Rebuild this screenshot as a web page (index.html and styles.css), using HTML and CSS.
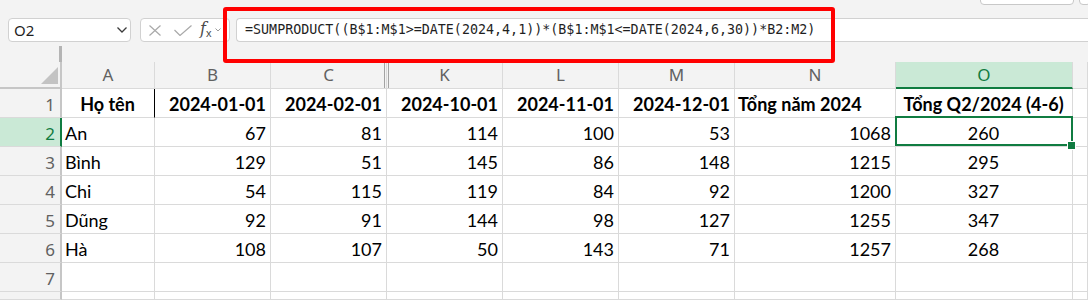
FILE: index.html
```html
<!DOCTYPE html>
<html lang="vi">
  <head>
    <meta charset="utf-8">
    <title>Bảng tính</title>
    <link rel="stylesheet" href="styles.css">
  </head>
  <body>
    <div class="ribbon">
      <div class="strip"><span></span><span class="edge"></span></div>
      <div class="bar">
        <div class="namebox">
          <span>O2</span>
          <svg width="10" height="6" viewBox="0 0 10 6"><polyline points="0.5,0.5 5,5 9.5,0.5" fill="none" stroke="#3b3b3b" stroke-width="1.3"/></svg>
        </div>
        <div class="fxbox">
          <svg class="x" width="12" height="11" viewBox="0 0 12 11"><path d="M0.5 0.5 L11.5 10.5 M11.5 0.5 L0.5 10.5" stroke="#a9a9a9" stroke-width="1.2"/></svg>
          <svg class="ok" width="18" height="11" viewBox="0 0 18 11"><polyline points="0.5,5 6,10.5 17.5,0.5" fill="none" stroke="#a9a9a9" stroke-width="1.2"/></svg>
          <span class="fx"><i>f</i><sub>x</sub></span>
          <svg class="dd" width="6" height="4" viewBox="0 0 6 4"><polyline points="0.5,0.5 3,3 5.5,0.5" fill="none" stroke="#9a9a9a" stroke-width="1"/></svg>
        </div>
        <div class="formula">=SUMPRODUCT((B$1:M$1&gt;=DATE(2024,4,1))*(B$1:M$1&lt;=DATE(2024,6,30))*B2:M2)</div>
      </div>
      <div class="split"><span></span></div>
      <div class="mark"></div>
    </div>

    <div class="sheet">
      <div class="corner"><svg width="17" height="17" viewBox="0 0 17 17"><polygon points="17,0 17,17 0,17" fill="#c3c3c3"/></svg></div>
      <div class="col">A</div>
      <div class="col">B</div>
      <div class="col hide-r">C</div>
      <div class="col hide-l">K</div>
      <div class="col">L</div>
      <div class="col">M</div>
      <div class="col">N</div>
      <div class="col sel">O</div>
      <div class="col"></div>

      <div class="row">1</div>
      <div class="c b ctr edge">Họ tên</div>
      <div class="c b num">2024-01-01</div>
      <div class="c b num">2024-02-01</div>
      <div class="c b num">2024-10-01</div>
      <div class="c b num">2024-11-01</div>
      <div class="c b num">2024-12-01</div>
      <div class="c b">Tổng năm 2024</div>
      <div class="c b ctr">Tổng Q2/2024 (4-6)</div>
      <div class="c"></div>

      <div class="row sel">2</div>
      <div class="c">An</div>
      <div class="c num">67</div>
      <div class="c num">81</div>
      <div class="c num">114</div>
      <div class="c num">100</div>
      <div class="c num">53</div>
      <div class="c num">1068</div>
      <div class="c ctr cur">260</div>
      <div class="c"></div>

      <div class="row">3</div>
      <div class="c">Bình</div>
      <div class="c num">129</div>
      <div class="c num">51</div>
      <div class="c num">145</div>
      <div class="c num">86</div>
      <div class="c num">148</div>
      <div class="c num">1215</div>
      <div class="c ctr">295</div>
      <div class="c"></div>

      <div class="row">4</div>
      <div class="c">Chi</div>
      <div class="c num">54</div>
      <div class="c num">115</div>
      <div class="c num">119</div>
      <div class="c num">84</div>
      <div class="c num">92</div>
      <div class="c num">1200</div>
      <div class="c ctr">327</div>
      <div class="c"></div>

      <div class="row">5</div>
      <div class="c">Dũng</div>
      <div class="c num">92</div>
      <div class="c num">91</div>
      <div class="c num">144</div>
      <div class="c num">98</div>
      <div class="c num">127</div>
      <div class="c num">1255</div>
      <div class="c ctr">347</div>
      <div class="c"></div>

      <div class="row">6</div>
      <div class="c">Hà</div>
      <div class="c num">108</div>
      <div class="c num">107</div>
      <div class="c num">50</div>
      <div class="c num">143</div>
      <div class="c num">71</div>
      <div class="c num">1257</div>
      <div class="c ctr">268</div>
      <div class="c"></div>

      <div class="row">7</div>
      <div class="c"></div><div class="c"></div><div class="c"></div><div class="c"></div><div class="c"></div><div class="c"></div><div class="c"></div><div class="c"></div><div class="c"></div>

      <div class="row"></div>
      <div class="c"></div><div class="c"></div><div class="c"></div><div class="c"></div><div class="c"></div><div class="c"></div><div class="c"></div><div class="c"></div><div class="c"></div>
    </div>
  </body>
</html>
```

FILE: styles.css
```css
* {
  box-sizing: border-box;
}
body {
  margin: 0;
  width: 1088px;
  height: 300px;
  overflow: hidden;
  background-color: #fff;
  font-family: Lato, "Liberation Sans", sans-serif;
  color: #000;
}

/* formula bar area */
.ribbon {
  position: relative;
  height: 62px;
  background-color: #f3f3f3;
}
.strip {
  display: flex;
  justify-content: flex-end;
  gap: 5px;
  height: 7px;
  overflow: hidden;
  & > span {
    width: 94px;
    height: 13px;
    margin-top: -8px;
    background-color: #fff;
    border: 1px solid #c8c8c8;
    border-radius: 4px;
    &.edge {
      width: 12px;
      margin-right: -3px;
    }
  }
}
.bar {
  display: flex;
  height: 24px;
  margin-top: 11px;
  padding-left: 8px;
}
.namebox {
  display: flex;
  align-items: center;
  justify-content: space-between;
  width: 123px;
  padding: 0 3px 0 5px;
  background-color: #fff;
  border: 1px solid #d1d1d1;
  border-radius: 4px;
  font: 15px/22px "Noto Sans", sans-serif;
  color: #1f1f1f;
}
.fxbox {
  display: flex;
  align-items: center;
  width: 90px;
  margin-left: 9px;
  padding-left: 8px;
  background-color: #fff;
  border: 1px solid #d1d1d1;
  border-radius: 4px;
  & .ok {
    margin-left: 13px;
  }
  & .fx {
    margin-left: 8px;
    font: 16px/1 "DejaVu Serif", serif;
    color: #4a4a4a;
    & sub {
      font-size: 11px;
      font-family: "Liberation Sans", sans-serif;
      vertical-align: -3px;
    }
  }
  & .dd {
    margin-left: 4px;
  }
}
.formula {
  flex: 1;
  margin-left: 6px;
  padding-left: 8px;
  background-color: #fff;
  border: 1px solid #d1d1d1;
  border-right: none;
  border-radius: 4px 0 0 4px;
  font: 13.35px/22px "DejaVu Sans Mono", monospace;
  color: #1f1f1f;
  white-space: pre;
}
.split {
  height: 20px;
  & > span {
    display: block;
    width: 3px;
    height: 16px;
    margin: 4px 0 0 59px;
    background-color: #b4b4b4;
  }
}
/* annotation box drawn over the formula */
.mark {
  position: absolute;
  left: 223px;
  top: 7px;
  width: 612px;
  height: 56px;
  border: 4px solid #ff0000;
  border-radius: 3px;
}

/* grid */
.sheet {
  display: grid;
  grid-template-columns: 62px 93px 116px 116px 116px 116px 116px 161px 177px 1fr;
  grid-template-rows: 27px repeat(7, 29px) 8px;
  & > div {
    border-right: 1px solid #dadada;
    border-bottom: 1px solid #dadada;
    white-space: nowrap;
  }
}
.corner {
  display: flex;
  align-items: flex-end;
  justify-content: flex-end;
  padding: 0 2px 3px 0;
  background-color: #f3f3f3;
  border-right: 2px solid #c6c6c6 !important;
  border-bottom: 2px solid #c6c6c6 !important;
}
.col {
  background-color: #f3f3f3;
  font: 17px/25px "Noto Sans", sans-serif;
  color: #616161;
  text-align: center;
  &.hide-r {
    box-shadow: inset -1px 0 0 #f3f3f3, inset -2px 0 0 #a3a3a3;
  }
  &.hide-l {
    box-shadow: inset 1px 0 0 #f3f3f3, inset 2px 0 0 #a3a3a3;
  }
  &.sel {
    background-color: #cae9d6;
    color: #107c41;
    border-bottom: 2px solid #107c41 !important;
  }
}
.row {
  padding: 3px 5px 0 0;
  background-color: #f3f3f3;
  border-right: 2px solid #c6c6c6 !important;
  font: 17px/25px "Noto Sans", sans-serif;
  color: #616161;
  text-align: right;
  &.sel {
    background-color: #cae9d6;
    color: #107c41;
    border-right-color: #107c41 !important;
  }
}
.c {
  padding: 2px 4px 0 3px;
  font-size: 18px;
  line-height: 26px;
  &.b {
    font-weight: 700;
  }
  &.num {
    text-align: right;
  }
  &.ctr {
    text-align: center;
  }
  &.edge {
    border-right-color: #000 !important;
  }
  &.cur {
    position: relative;
    &::before {
      content: "";
      position: absolute;
      left: -1px;
      top: -2px;
      right: -1px;
      bottom: 0;
      border: 2px solid #107c41;
    }
    &::after {
      content: "";
      position: absolute;
      right: -4px;
      bottom: -4px;
      width: 7px;
      height: 7px;
      background-color: #107c41;
      border: 1px solid #fff;
    }
  }
}
```
